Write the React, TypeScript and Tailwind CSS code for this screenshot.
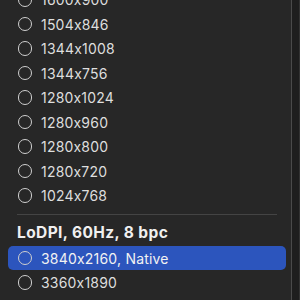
const hidpi = ["1600x900", "1504x846", "1344x1008", "1344x756", "1280x1024", "1280x960", "1280x800", "1280x720", "1024x768"];
const lodpi = ["3840x2160, Native", "3360x1890"];

function Radio() {
  return <span className="h-[14.5px] w-[14.5px] shrink-0 rounded-full border-[1.5px] border-[#cfcfcf]" />;
}

function Row({ label, selected }: { label: string; selected?: boolean }) {
  return (
    <div
      className={`flex h-[24.5px] items-center gap-[9px] rounded-[5px] px-[9.5px] ${selected ? "bg-[#2c55bd]" : ""}`}
    >
      <Radio />
      <span className={`tracking-[0.2px] ${selected ? "text-[#f2f2f2]" : "text-[#dedede]"}`}>{label}</span>
    </div>
  );
}

export default function App() {
  return (
    <div
      className="flex h-[300px] w-[300px] overflow-hidden bg-[#1e1e1e] text-[14px] [font-feature-settings:'calt'_0]"
      style={{ fontFamily: "Inter, 'Noto Sans', sans-serif" }}
    >
      <div className="h-full w-[292px] border-r border-[#4a4a4a] bg-[#272727] pl-[8px] pr-[5px]">
        <div className="-mt-[12.75px]">
          {hidpi.map((r) => (
            <Row key={r} label={r} />
          ))}
        </div>
        <div className="mx-[9px] mt-[6.5px] h-px bg-[#444444]" />
        <div className="mt-[5.5px] flex h-[24px] items-center pl-[9px] text-[15.5px] font-bold tracking-[0.4px] text-[#f0f0f0]">
          LoDPI, 60Hz, 8 bpc
        </div>
        <div className="mt-px">
          {lodpi.map((r, i) => (
            <Row key={r} label={r} selected={i === 0} />
          ))}
        </div>
      </div>
      <div className="h-full flex-1 border-r border-[#333333]" />
    </div>
  );
}
